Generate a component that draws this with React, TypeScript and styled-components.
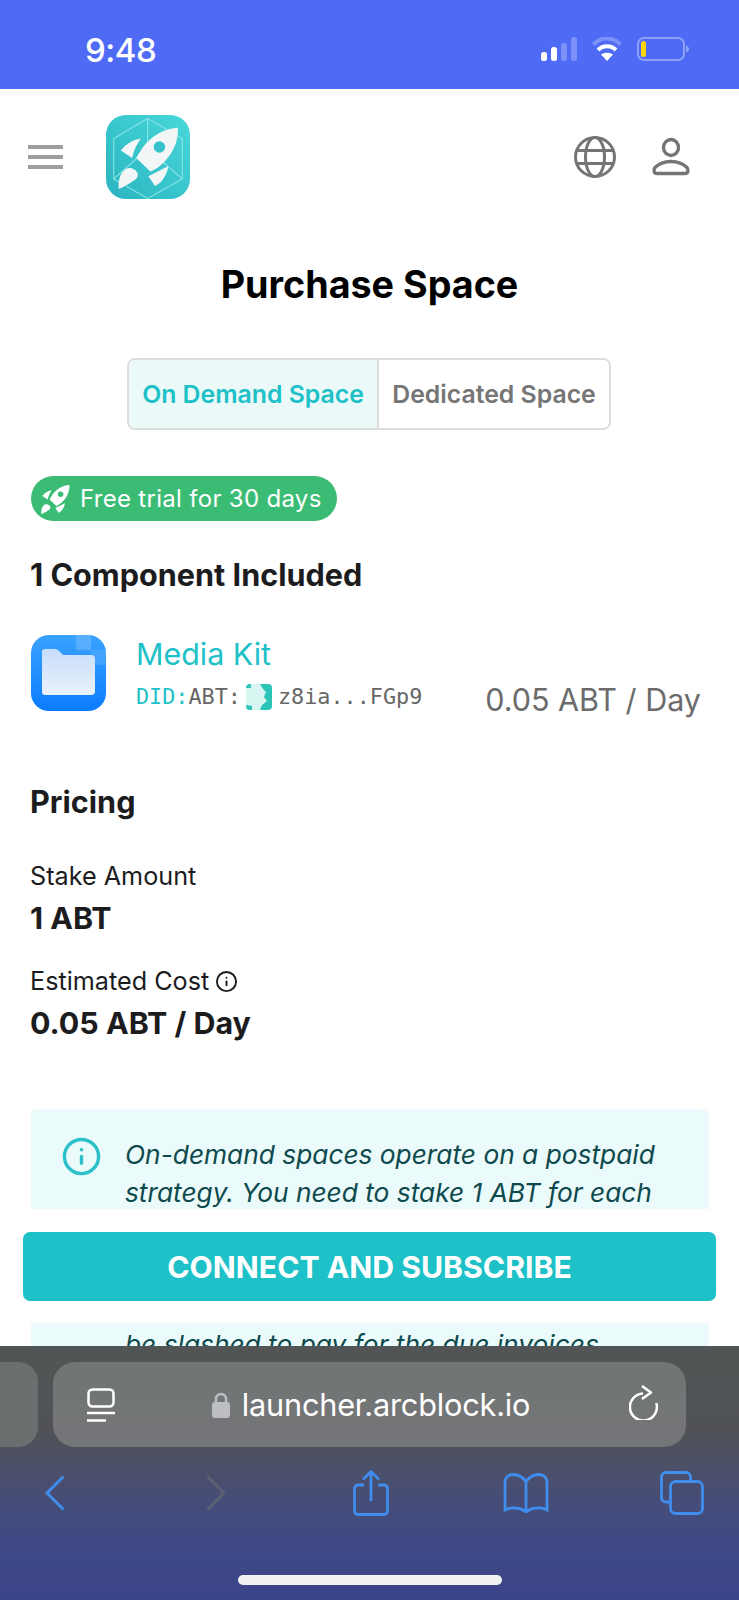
import styled, { createGlobalStyle } from "styled-components";
import { Info } from "lucide-react";

const GlobalStyle = createGlobalStyle`
  html, body {
    margin: 0;
    padding: 0;
    background: #fff;
    font-family: Inter, "Noto Sans", sans-serif;
    color: #1c1c1e;
  }
`;

const Page = styled.div`
  position: relative;
  width: 739px;
  height: 1600px;
  overflow: hidden;
  background: #fff;
`;

const StatusBar = styled.div`
  height: 89px;
  background: #4f6bf5;
  display: flex;
  align-items: flex-start;
  justify-content: space-between;
  padding: 0 50px 0 85px;
  box-sizing: border-box;
  color: #fff;
`;

const Time = styled.div`
  font-size: 33px;
  font-weight: 500;
  line-height: 38px;
  margin-top: 31px;
  letter-spacing: -0.5px;
`;

const StatusIcons = styled.div`
  display: flex;
  align-items: center;
  gap: 15px;
  margin-top: 37px;
`;

const Header = styled.header`
  display: flex;
  align-items: center;
  height: 84px;
  margin-top: 26px;
  padding: 0 48px 0 28px;
`;

const MenuLines = styled.div`
  width: 35px;
  height: 24px;
  display: flex;
  flex-direction: column;
  justify-content: space-between;
  span {
    height: 4px;
    background: #9e9e9e;
  }
`;

const Logo = styled.svg`
  width: 84px;
  height: 84px;
  margin-left: 43px;
  border-radius: 20px;
`;

const HeaderActions = styled.div`
  margin-left: auto;
  display: flex;
  align-items: center;
  gap: 35px;
`;

const Main = styled.main`
  padding: 0 30px;
`;

const Title = styled.h1`
  margin: 63px 0 0;
  font-size: 37.7px;
  line-height: 44px;
  font-weight: 700;
  text-align: center;
  color: #000;
`;

const Tabs = styled.div`
  display: flex;
  width: 484px;
  height: 72px;
  box-sizing: border-box;
  margin: 52px 0 0 97px;
  border: 2px solid #dddddd;
  border-radius: 8px;
  overflow: hidden;
`;

const Tab = styled.div<{ $active?: boolean }>`
  display: flex;
  align-items: center;
  justify-content: center;
  font-size: 24.8px;
  font-weight: 600;
  white-space: nowrap;
  width: ${(p) => (p.$active ? "250px" : "auto")};
  flex: ${(p) => (p.$active ? "none" : "1")};
  color: ${(p) => (p.$active ? "#1dc1c7" : "#757575")};
  background: ${(p) => (p.$active ? "#ebf9f9" : "#fff")};
  border-right: ${(p) => (p.$active ? "2px solid #dddddd" : "none")};
  box-sizing: border-box;
`;

const TrialBadge = styled.div`
  display: inline-flex;
  align-items: center;
  gap: 8px;
  height: 45px;
  width: 306px;
  box-sizing: border-box;
  margin: 46px 0 0 1px;
  padding-left: 9px;
  border-radius: 23px;
  background: #3bbc74;
  color: #fff;
  font-size: 24px;
  letter-spacing: 0.3px;
  white-space: nowrap;
`;

const SectionTitle = styled.h2<{ $top: number }>`
  margin: ${(p) => p.$top}px 0 0;
  font-size: 30.6px;
  line-height: 36px;
  font-weight: 700;
  color: #1c1c1e;
`;

const ComponentRow = styled.div`
  display: flex;
  align-items: stretch;
  margin: 42px 0 0 1px;
  height: 76px;
`;

const FileIcon = styled.svg`
  width: 75px;
  height: 76px;
  flex: none;
`;

const ComponentInfo = styled.div`
  margin-left: 30px;
  display: flex;
  flex-direction: column;
`;

const ComponentName = styled.div`
  font-size: 30.4px;
  line-height: 36px;
  margin-top: 1px;
  color: #1dc1c7;
`;

const DidLine = styled.div`
  display: flex;
  align-items: center;
  margin-top: 11px;
  font-family: "DejaVu Sans Mono", "Liberation Mono", monospace;
  font-size: 21.8px;
  line-height: 28px;
  color: #666;
  b {
    font-weight: 400;
    color: #1dc1c7;
  }
`;

const DidBadge = styled.svg`
  width: 26px;
  height: 26px;
  margin: 0 6px 0 5px;
`;

const ComponentPrice = styled.div`
  align-self: flex-end;
  font-size: 30.5px;
  line-height: 36px;
  margin: 0 8px -7px auto;
  color: #6b6b6b;
  white-space: nowrap;
`;

const Label = styled.div<{ $top: number }>`
  display: flex;
  align-items: center;
  gap: 6px;
  margin-top: ${(p) => p.$top}px;
  font-size: 25.2px;
  line-height: 30px;
  color: #1c1c1e;
`;

const Value = styled.div`
  margin-top: 9px;
  font-size: 30.4px;
  line-height: 36px;
  font-weight: 700;
  color: #1c1c1e;
`;

const NoticeCard = styled.div`
  display: flex;
  gap: 23px;
  margin: 68px 0 0 1px;
  padding: 27px 20px 100px 30px;
  background: #ebfafa;
  border-radius: 6px;
  overflow: hidden;
  width: 678px;
  box-sizing: border-box;
`;

const NoticeText = styled.div`
  font-size: 26.3px;
  line-height: 38px;
  font-style: italic;
  color: #0e4a4d;
  white-space: nowrap;
`;

const LastLine = styled.div`
  margin-top: 114px;
`;

const ActionFooter = styled.div`
  position: absolute;
  left: 0;
  right: 0;
  top: 1209px;
  height: 114px;
  background: #fff;
  padding: 23px 23px 0;
  box-sizing: border-box;
`;

const SubscribeButton = styled.button`
  width: 693px;
  height: 69px;
  border: 0;
  border-radius: 7px;
  background: #1dc1c7;
  color: #fff;
  font-family: inherit;
  font-size: 30.2px;
  font-weight: 700;
`;

const BrowserChrome = styled.div`
  position: absolute;
  left: 0;
  right: 0;
  top: 1346px;
  bottom: 0;
  background: linear-gradient(180deg, #525555 0%, #505256 34%, #4a4f6e 52%, #3f4a85 76%, #3b4489 100%);
`;

const AddressRow = styled.div`
  display: flex;
  gap: 15px;
  height: 85px;
  margin: 16px 0 0 -60px;
`;

const PrevTab = styled.div`
  width: 98px;
  background: #6b6e6e;
  border-radius: 20px;
`;

const AddressField = styled.div`
  width: 633px;
  display: flex;
  align-items: center;
  padding: 0 27px 0 34px;
  box-sizing: border-box;
  background: linear-gradient(180deg, #717575, #747578);
  border-radius: 22px;
  color: #fff;
`;

const UrlBox = styled.div`
  flex: 1;
  display: flex;
  align-items: center;
  justify-content: center;
  gap: 12px;
  margin-right: 2px;
  font-size: 30.7px;
  letter-spacing: -0.2px;
`;

const ReloadIcon = styled.svg`
  margin-bottom: 4px;
`;

const ToolRow = styled.div`
  display: grid;
  grid-template-columns: 161px 147px 150px 157px auto;
  align-items: center;
  margin-top: 23px;
  padding-left: 45px;
  height: 46px;
`;

const HomeBar = styled.div`
  position: absolute;
  left: 238px;
  bottom: 15px;
  width: 264px;
  height: 10px;
  border-radius: 5px;
  background: #f0f1f2;
`;

const Rocket = ({ fill = "#fff" }: { fill?: string }) => (
  <g fill={fill}>
    <path d="M214 38C168 40 126 70 106 102c-6 10-12 18-16 26l42 40c10-4 20-10 30-18 34-28 54-68 52-112z" />
    <path d="M104 70C78 74 58 88 44 106l34 22c4-22 14-42 26-58z" />
    <path d="M38 220c-2-26 4-48 22-60 14-6 30 2 34 14 2 10-2 16-10 20-14 10-30 20-46 26z" />
    <path d="M186 152l-60 30 20 29c20-8 34-30 40-59z" />
  </g>
);

const Globe = () => (
  <svg width="42" height="42" viewBox="0 0 42 42" fill="none" stroke="#757575" strokeWidth="3">
    <circle cx="21" cy="21" r="19.500" />
    <ellipse cx="21" cy="21" rx="9.500" ry="19.500" />
    <path d="M2.600 14.500h36.800M2.600 27.500h36.800" />
  </svg>
);

const Person = () => (
  <svg width="40" height="40" viewBox="0 0 40 40" fill="none" stroke="#757575" strokeWidth="3.400">
    <ellipse cx="20" cy="10.500" rx="7.500" ry="8" />
    <path
      d="M6 36.500h28c3 0 4-3 2-6-4-4-9-6-16-6s-12 2-16 6c-2 3-1 6 2 6z"
      strokeLinejoin="round"
    />
  </svg>
);

function App() {
  return (
    <Page>
      <GlobalStyle />
      <StatusBar>
        <Time>9:48</Time>
        <StatusIcons>
          <svg width="36" height="24" viewBox="0 0 36 24">
            <rect x="0" y="15" width="6" height="9" rx="2.500" fill="#fff" />
            <rect x="10" y="10" width="6" height="14" rx="2.500" fill="#fff" />
            <rect x="20" y="6" width="6" height="18" rx="2.500" fill="#7d92f8" />
            <rect x="30" y="0" width="6" height="24" rx="2.500" fill="#7d92f8" />
          </svg>
          <svg width="30" height="24" viewBox="0 0 30 24" fill="none">
            <path d="M1.500 7.500C9 -0.500 21 -0.500 28.500 7.500" stroke="#7d92f8" strokeWidth="4" />
            <path d="M6 13C11 8 19 8 24 13" stroke="#fff" strokeWidth="4" />
            <path d="M15 24l-6-6.500c3.500-2.500 8.500-2.500 12 0z" fill="#fff" />
          </svg>
          <svg width="52" height="24" viewBox="0 0 52 24" fill="none">
            <rect x="1" y="1" width="46" height="22" rx="6" stroke="#8ea1f9" strokeWidth="2" />
            <rect x="4" y="4" width="5" height="16" rx="2.500" fill="#ffd60a" />
            <path d="M49 8.500c2 .5 3 2 3 3.500s-1 3-3 3.500z" fill="#8ea1f9" />
          </svg>
        </StatusIcons>
      </StatusBar>

      <Header>
        <MenuLines>
          <span />
          <span />
          <span />
        </MenuLines>
        <Logo viewBox="0 0 250 250">
          <defs>
            <linearGradient id="logoBg" x1="0" y1="1" x2="1" y2="0">
              <stop offset="0" stopColor="#2ab4c0" />
              <stop offset="1" stopColor="#49d8da" />
            </linearGradient>
          </defs>
          <rect width="250" height="250" fill="url(#logoBg)" />
          <path
            d="M124 10l103 60v120l-103 58-101-58V70zM124 10v90l103 90M124 100L23 190"
            fill="none"
            stroke="#8fe8e8"
            strokeWidth="3"
          />
          <Rocket fill="#f2f6f7" />
          <circle cx="159" cy="95" r="17" fill="#36c3ca" />
        </Logo>
        <HeaderActions>
          <Globe />
          <Person />
        </HeaderActions>
      </Header>

      <Main>
        <Title>Purchase Space</Title>
        <Tabs>
          <Tab $active>On Demand Space</Tab>
          <Tab>Dedicated Space</Tab>
        </Tabs>

        <TrialBadge>
          <svg width="32" height="32" viewBox="30 25 200 200">
            <Rocket />
            <circle cx="159" cy="95" r="17" fill="#3bbc74" />
          </svg>
          Free trial for 30 days
        </TrialBadge>

        <SectionTitle $top={36}>1 Component Included</SectionTitle>
        <ComponentRow>
          <FileIcon viewBox="0 0 75 76">
            <defs>
              <linearGradient id="fileBg" x1="0" y1="0" x2="0" y2="1">
                <stop offset="0" stopColor="#3aa2ff" />
                <stop offset="1" stopColor="#0b7cff" />
              </linearGradient>
              <linearGradient id="folderBg" x1="0" y1="0" x2="0" y2="1">
                <stop offset="0" stopColor="#c6dcfb" />
                <stop offset="1" stopColor="#ebf1fd" />
              </linearGradient>
            </defs>
            <rect width="75" height="76" rx="18" fill="url(#fileBg)" />
            <path d="M45 0h12c3 0 3 0 3 3v12H45z" fill="#6fb9ff" opacity="0.6" />
            <rect x="60" y="15" width="15" height="15" fill="#6fb9ff" opacity="0.35" />
            <path
              d="M11 17c0-2 1-3 3-3h10c2 0 3 1 4 2l4 4h28c2 0 4 1 4 3v34c0 2-2 3-4 3H14c-2 0-3-1-3-3z"
              fill="url(#folderBg)"
            />
          </FileIcon>
          <ComponentInfo>
            <ComponentName>Media Kit</ComponentName>
            <DidLine>
              <b>DID:</b>ABT:
              <DidBadge viewBox="0 0 26 26">
                <rect width="26" height="26" rx="4" fill="#2cc4b6" />
                <path
                  d="M0 4h5V0h9l3 5 3 3-2 5 3 4-5 4-2 5H6v-4l-6-1z"
                  fill="#d8f6f1"
                />
              </DidBadge>
              z8ia...FGp9
            </DidLine>
          </ComponentInfo>
          <ComponentPrice>0.05 ABT / Day</ComponentPrice>
        </ComponentRow>

        <SectionTitle $top={73}>Pricing</SectionTitle>
        <Label $top={41}>Stake Amount</Label>
        <Value>1 ABT</Value>
        <Label $top={30}>
          Estimated Cost
          <Info size={23} color="#1c1c1e" strokeWidth={2} />
        </Label>
        <Value>0.05 ABT / Day</Value>

        <NoticeCard>
          <Info size={41} color="#2cc1c8" strokeWidth={2} style={{ flex: "none" }} />
          <NoticeText>
            On-demand spaces operate on a postpaid
            <br />
            strategy. You need to stake 1 ABT for each
            <LastLine>be slashed to pay for the due invoices.</LastLine>
          </NoticeText>
        </NoticeCard>
      </Main>

      <ActionFooter>
        <SubscribeButton>CONNECT AND SUBSCRIBE</SubscribeButton>
      </ActionFooter>

      <BrowserChrome>
        <AddressRow>
          <PrevTab />
          <AddressField>
            <svg width="28" height="34" viewBox="0 0 28 34" fill="none" stroke="#fff" strokeWidth="2.500">
              <rect x="1.500" y="1.500" width="25" height="17" rx="4" />
              <path d="M0 25h28M0 32.500h19" />
            </svg>
            <UrlBox>
              <svg width="18" height="26" viewBox="0 0 18 26">
                <path d="M4 11V7a5 5 0 0 1 10 0v4" fill="none" stroke="#bdbec2" strokeWidth="2.500" />
                <rect x="0" y="10" width="18" height="16" rx="3" fill="#bdbec2" />
              </svg>
              launcher.arcblock.io
            </UrlBox>
            <ReloadIcon width="30" height="35" viewBox="0 0 30 35" fill="none" stroke="#fff" strokeWidth="2.500">
              <path d="M14 8.500A13.500 13.500 0 1 0 27.300 18" />
              <path d="M13 1l9 6.500-9 6.500" strokeLinejoin="round" />
            </ReloadIcon>
          </AddressField>
        </AddressRow>
        <ToolRow>
          <svg width="20" height="36" viewBox="0 0 20 36" fill="none" stroke="#3f8ded" strokeWidth="3">
            <path d="M18.500 1.500L2 18l16.500 16.500" />
          </svg>
          <svg width="20" height="36" viewBox="0 0 20 36" fill="none" stroke="#5d6172" strokeWidth="3">
            <path d="M1.500 1.500L18 18 1.500 34.500" />
          </svg>
          <svg width="36" height="46" viewBox="0 0 36 46" fill="none" stroke="#3f8ded" strokeWidth="2.800">
            <path d="M11 15H5a3.500 3.500 0 0 0-3.500 3.500V41A3.500 3.500 0 0 0 5 44.500h26a3.500 3.500 0 0 0 3.500-3.500V18.500A3.500 3.500 0 0 0 31 15h-6" />
            <path d="M18 31V2M10 9.500l8-8 8 8" />
          </svg>
          <svg width="46" height="40" viewBox="0 0 46 40" fill="none" stroke="#3f8ded" strokeWidth="2.800">
            <path d="M23 9c-3-5-8-7.500-13-7.500S2 5 2 9v28c5-3 15-3 21 2 6-5 16-5 21-2V9c0-4-3-7.500-8-7.500S26 4 23 9zM23 9v30" />
          </svg>
          <svg width="44" height="44" viewBox="0 0 44 44" fill="none" stroke="#3f8ded" strokeWidth="2.800">
            <path d="M9 31H6a4.500 4.500 0 0 1-4.500-4.500V6A4.500 4.500 0 0 1 6 1.500h20A4.500 4.500 0 0 1 30.500 6v4" />
            <rect x="10.500" y="10.500" width="32" height="32" rx="5" />
          </svg>
        </ToolRow>
        <HomeBar />
      </BrowserChrome>
    </Page>
  );
}

export default App;
